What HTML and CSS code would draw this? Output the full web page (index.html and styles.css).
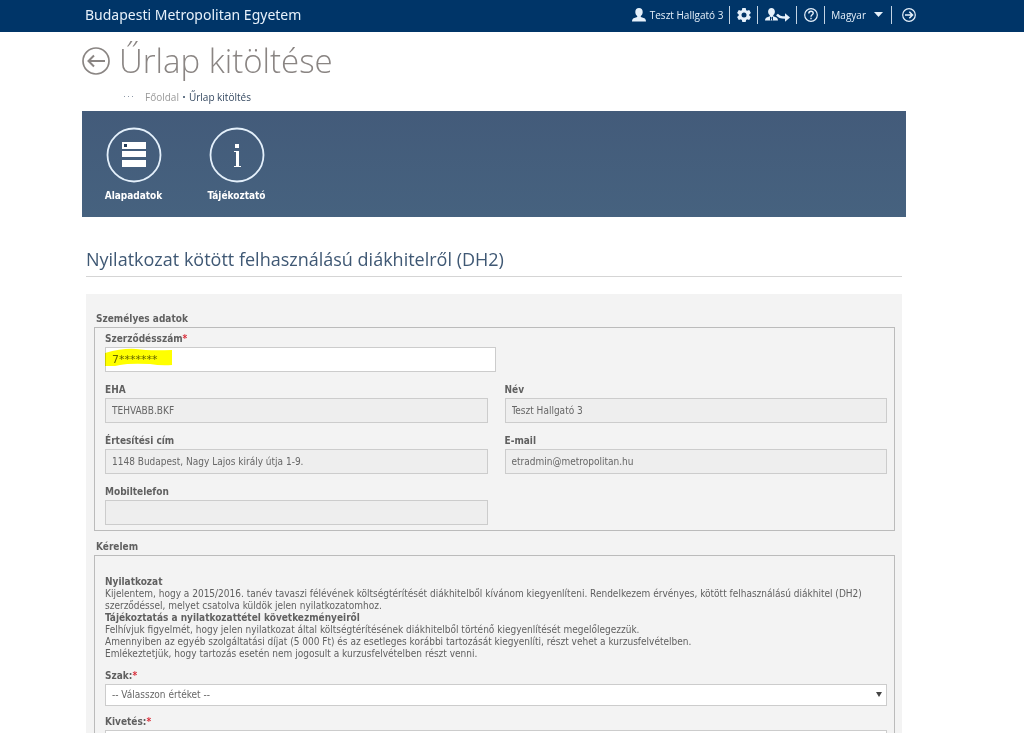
FILE: index.html
```html
<!DOCTYPE html>
<html lang="hu">
<head>
<meta charset="utf-8">
<title>Űrlap kitöltése</title>
<link rel="stylesheet" href="styles.css">
</head>
<body>
<header class="topbar">
  <a class="brand" href="#">Budapesti Metropolitan Egyetem</a>
  <nav class="tools" aria-label="Felhasználói menü">
    <a class="tool user" href="#">
      <svg width="14" height="14" viewBox="0 0 14 14" fill="currentColor"><path d="M7 0c2.300 0 3.700 1.600 3.700 3.900 0 1.800-.8 3.200-1.900 4v1l3.600 1.400c1 .5 1.500 1.500 1.600 3.200H0c.1-1.700.6-2.700 1.600-3.200L5.200 8.900v-1c-1.100-.8-1.900-2.200-1.900-4C3.300 1.600 4.700 0 7 0z"/></svg>
      <span>Teszt Hallgató 3</span>
    </a>
    <button class="tool" type="button" aria-label="Beállítások">
      <svg width="14" height="14" viewBox="0 0 14 14"><g fill="currentColor"><circle cx="7" cy="7" r="5.300"/><path id="tooth" d="M5.300 0h3.400l.6 3H4.700zM4.700 11h4.600l-.6 3H5.300z"/><use href="#tooth" transform="rotate(60 7 7)"/><use href="#tooth" transform="rotate(120 7 7)"/></g><circle class="gear-hole" cx="7" cy="7" r="2.500"/></svg>
    </button>
    <button class="tool" type="button" aria-label="Szerepkörváltás">
      <svg width="25" height="14" viewBox="0 0 25 14"><path fill="currentColor" d="M6.500 0c2 0 3.400 1.500 3.400 3.600 0 1.700-.7 2.900-1.700 3.700v.9l3.200 1.200c1 .5 1.500 1.500 1.600 3.100H0c.1-1.600.6-2.600 1.600-3.100l3.200-1.200v-.9C3.800 6.500 3.100 5.300 3.100 3.600 3.100 1.500 4.500 0 6.500 0z"/><path class="collar" d="M5 9l1.500 1L8 9M5.500 9v3.500M7.500 9v3.500"/><path d="M12 6.500c2 2.700 5 3.200 9 3" fill="none" stroke="currentColor" stroke-width="2.400"/><path d="M20 5.200l5 4.300-5 4.300z" fill="currentColor"/></svg>
    </button>
    <button class="tool" type="button" aria-label="Súgó">
      <svg width="14" height="14" viewBox="0 0 14 14" fill="none" stroke="currentColor"><circle cx="7" cy="7" r="6.300" stroke-width="1.200"/><path d="M4.800 5.500C4.800 4 5.700 3.200 7 3.200s2.200.8 2.200 2C9.200 6.700 7 6.900 7 8.700M7 9.700v1.500" stroke-width="1.400"/></svg>
    </button>
    <button class="tool language" type="button">
      <span>Magyar</span>
      <svg width="9" height="5" viewBox="0 0 9 5" fill="currentColor"><path d="M0 0h9L4.500 5z"/></svg>
    </button>
    <button class="tool logout" type="button" aria-label="Kijelentkezés">
      <svg width="14" height="14" viewBox="0 0 14 14" fill="none" stroke="currentColor"><circle cx="7" cy="7" r="6.300" stroke-width="1.200"/><path d="M3 7h7.500M7.300 3.800L10.500 7l-3.200 3.200" stroke-width="1.500"/></svg>
    </button>
  </nav>
</header>

<main class="page">
  <div class="title-row">
    <a class="back" href="#" aria-label="Vissza">
      <svg width="28" height="28" viewBox="0 0 28 28" fill="none" stroke="currentColor" stroke-width="1.700"><circle cx="14" cy="14" r="13"/><path d="M23 14H6.500M12 8.500L6.500 14l5.500 5.500" stroke-width="2"/></svg>
    </a>
    <h1>Űrlap kitöltése</h1>
  </div>
  <nav class="crumbs" aria-label="Morzsamenü">
    <svg width="9" height="2" viewBox="0 0 9 2" fill="#8d99a8"><path d="M0 0h1v1H0zM4 0h1v1H4zM8 0h1v1H8z"/></svg>
    <a href="#">Főoldal</a>
    <span class="dot"></span>
    <span class="current">Űrlap kitöltés</span>
  </nav>

  <nav class="banner" aria-label="Űrlap részei">
    <a class="step" href="#">
      <svg width="56" height="56" viewBox="0 0 56 56"><circle cx="28" cy="28" r="26.500" fill="none" stroke="#e4f0fb" stroke-width="1.800"/><path fill="#fff" d="M16 15h24v7H16zM16 24h24v6H16zM16 33h24v7H16z"/><path fill="#243c58" d="M18 17h3v3h-3z"/></svg>
      <span>Alapadatok</span>
    </a>
    <a class="step" href="#">
      <svg width="56" height="56" viewBox="0 0 56 56"><circle cx="28" cy="28" r="26.500" fill="none" stroke="#e4f0fb" stroke-width="1.800"/><path fill="#fff" d="M26 17h4v4h-4zM25 24h5v15h2v1h-7v-1h2V25h-2z"/></svg>
      <span>Tájékoztató</span>
    </a>
  </nav>

  <section class="content">
    <h2>Nyilatkozat kötött felhasználású diákhitelről (DH2)</h2>
    <form class="panel">
      <h3 id="personal">Személyes adatok</h3>
      <div class="group personal" role="group" aria-labelledby="personal">
        <div class="field wide">
          <label for="contract">Szerződésszám<b class="req">*</b></label>
          <div class="marked">
            <input id="contract" class="masked" type="text" value="7*******">
            <svg class="marker" width="68" height="18" viewBox="0 0 68 18"><path d="M0 5Q18 0 31 1Q44 3 67 2V17Q56 18 45 16Q24 15 15 17Q8 19 0 18Z" fill="#ff0"/></svg>
          </div>
        </div>
        <div class="field start">
          <label for="eha">EHA</label>
          <input id="eha" type="text" value="TEHVABB.BKF" readonly>
        </div>
        <div class="field">
          <label for="name">Név</label>
          <input id="name" type="text" value="Teszt Hallgató 3" readonly>
        </div>
        <div class="field">
          <label for="address">Értesítési cím</label>
          <input id="address" type="text" value="1148 Budapest, Nagy Lajos király útja 1-9." readonly>
        </div>
        <div class="field">
          <label for="email">E-mail</label>
          <input id="email" type="text" value="etradmin@metropolitan.hu" readonly>
        </div>
        <div class="field">
          <label for="mobile">Mobiltelefon</label>
          <input id="mobile" type="text" value="" readonly>
        </div>
      </div>

      <h3 id="request">Kérelem</h3>
      <div class="group request" role="group" aria-labelledby="request">
        <div class="statement">
          <h4>Nyilatkozat</h4>
          <p>Kijelentem, hogy a 2015/2016. tanév tavaszi félévének költségtérítését diákhitelből kívánom kiegyenlíteni. Rendelkezem érvényes, kötött felhasználású diákhitel (DH2) szerződéssel, melyet csatolva küldök jelen nyilatkozatomhoz.</p>
          <h4>Tájékoztatás a nyilatkozattétel következményeiről</h4>
          <p>Felhívjuk figyelmét, hogy jelen nyilatkozat által költségtérítésének diákhitelből történő kiegyenlítését megelőlegezzük.</p>
          <p>Amennyiben az egyéb szolgáltatási díjat (5 000 Ft) és az esetleges korábbi tartozását kiegyenlíti, részt vehet a kurzusfelvételben.</p>
          <p>Emlékeztetjük, hogy tartozás esetén nem jogosult a kurzusfelvételben részt venni.</p>
        </div>
        <div class="field">
          <label for="major">Szak:<b class="req">*</b></label>
          <div class="picker">
            <select id="major"><option>-- Válasszon értéket --</option></select>
            <svg class="caret" width="6" height="5" viewBox="0 0 6 5"><path d="M0 0h6L3 5z" fill="#444"/></svg>
          </div>
        </div>
        <div class="field">
          <label for="charge">Kivetés:<b class="req">*</b></label>
          <div class="picker"><select id="charge"><option></option></select></div>
        </div>
      </div>
    </form>
  </section>
</main>
</body>
</html>
```

FILE: styles.css
```css
* { box-sizing: border-box; }

body {
  margin: 0;
  height: 100vh;
  overflow: hidden;
  background: #fff;
  color: #606060;
  font: 10px/12px "DejaVu Sans Condensed", "Noto Sans", sans-serif;
}

svg { display: block; flex: none; }
a { color: inherit; text-decoration: none; }
h1, h2, h3, h4, p { margin: 0; }

.topbar {
  display: flex;
  align-items: center;
  justify-content: space-between;
  height: 32px;
  padding: 0 108px 3px 85px;
  background: #003568;
  color: #e6f1fb;
}
.brand { font: 14px/20px "Noto Sans", sans-serif; }
.tools { display: flex; align-items: center; }
.tool {
  display: flex;
  align-items: center;
  gap: 4px;
  height: 18px;
  margin: 0;
  padding: 0 6px 0 7px;
  border: 0;
  border-left: 1px solid #c3d4e4;
  background: none;
  color: inherit;
  font: 10px/18px "Open Sans", sans-serif;
}
.tool.user { border-left: 0; }
.tool.language { gap: 8px; padding: 0 8px 0 6px; }
.tool.logout { padding: 0 0 0 10px; }
.gear-hole { fill: #003568; }
.collar { fill: none; stroke: #003568; stroke-width: 1; }

.page { padding: 0 118px 0 82px; }

.title-row {
  display: flex;
  align-items: center;
  gap: 9px;
  height: 58px;
  color: #8a8583;
}
h1 {
  font: 300 33px/58px "Open Sans", sans-serif;
}
.crumbs {
  display: flex;
  align-items: center;
  height: 21px;
  padding: 0 0 8px 42px;
  color: #999;
  font: 10px/14px "Open Sans", sans-serif;
}
.crumbs a { margin-left: 12px; }
.dot { width: 2px; height: 2px; margin: 0 4px; background: #66778a; }
.current { color: #344860; }

.banner {
  display: flex;
  height: 106px;
  padding: 16px 0 0;
  background: linear-gradient(#435b7a, #46627f);
  color: #fff;
  font-weight: 700;
}
.step {
  display: flex;
  flex-direction: column;
  align-items: center;
  gap: 7px;
  width: 103px;
}

.content { padding: 28px 4px 0; }
h2 {
  height: 32px;
  border-bottom: 1px solid #d5d5d5;
  color: #3f5874;
  font: 400 18px/28px "Open Sans", sans-serif;
}
.panel {
  margin-top: 17px;
  padding: 19px 7px 20px 8px;
  background: #f3f3f3;
}
h3 { padding-left: 2px; font-size: 10px; line-height: 12px; }
h4 { font-size: 10px; line-height: 12px; }
.group {
  margin: 2px 0 10px;
  border: 1px solid #bbb;
}
.personal {
  display: grid;
  grid-template-columns: 1fr 1fr;
  gap: 12px 17px;
  padding: 5px 7px 5px 10px;
}
.field { min-width: 0; }
.field label {
  display: block;
  margin-bottom: 2px;
  font-weight: 700;
  line-height: 12px;
}
.req { color: #d9303c; }
.wide { grid-column: 1; margin-right: -8px; }
.start { grid-column: 1; }

input, select {
  display: block;
  width: 100%;
  height: 25px;
  margin: 0;
  padding: 0 6px;
  border: 1px solid #ccc;
  border-radius: 0;
  background: #fff;
  color: #666;
  font: 10px/12px "DejaVu Sans Condensed", "Noto Sans", sans-serif;
}
.masked { font: 11px/12px "DejaVu Sans", sans-serif; }
input[readonly] { background: #eee; }
select { height: 22px; appearance: none; }

.marked, .picker { position: relative; }
.marker {
  position: absolute;
  left: 0;
  top: 1px;
  mix-blend-mode: multiply;
  pointer-events: none;
}
.caret {
  position: absolute;
  right: 5px;
  top: 8px;
  pointer-events: none;
}

.request {
  display: grid;
  gap: 10px;
  padding: 20px 7px 12px 10px;
}
```
